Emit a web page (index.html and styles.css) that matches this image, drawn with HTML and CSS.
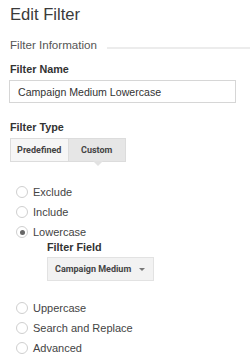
FILE: index.html
```html
<!DOCTYPE html>
<html lang="en">
<head>
    <meta charset="UTF-8">
    <meta name="viewport" content="width=device-width, initial-scale=1.0">
    <title>Edit Filter</title>
    <link rel="stylesheet" href="styles.css">
</head>
<body>
    <div class="page">
        <h1 class="title">Edit Filter</h1>

        <!-- Filter Information -->
        <div class="section-head">
            <span class="section-name">Filter Information</span>
            <span class="section-line"></span>
        </div>

        <label class="field-label" for="filterName">Filter Name</label>
        <input class="text-input" type="text" id="filterName" value="Campaign Medium Lowercase">

        <!-- Filter Type -->
        <div class="field-label type-label">Filter Type</div>
        <div class="segments">
            <button class="segment">Predefined</button>
            <button class="segment selected">Custom</button>
        </div>

        <div class="radios">
            <label class="radio-row"><span class="radio"></span>Exclude</label>
            <label class="radio-row"><span class="radio"></span>Include</label>
            <label class="radio-row"><span class="radio checked"></span>Lowercase</label>
            <div class="sub-field">
                <div class="sub-label">Filter Field</div>
                <button class="dropdown">Campaign Medium <span class="caret"></span></button>
            </div>
            <label class="radio-row"><span class="radio"></span>Uppercase</label>
            <label class="radio-row"><span class="radio"></span>Search and Replace</label>
            <label class="radio-row"><span class="radio"></span>Advanced</label>
        </div>
    </div>
</body>
</html>
```

FILE: styles.css
```css
body { margin: 0; background: #fff; font-family: "Liberation Sans", Arial, sans-serif; color: #333; }
.page { padding-left: 10px; }

.title { margin: 5px 0 0; font-size: 16.6px; line-height: 20px; font-weight: normal; color: #3a3a3a; }

.section-head { display: flex; align-items: flex-end; margin-top: 13px; height: 14px; }
.section-name { font-size: 11.6px; line-height: 14px; color: #555; white-space: nowrap; }
.section-line { flex: 1; height: 2px; background: #ececec; margin: 0 0 3px 10px; }

.field-label { display: block; margin-top: 11px; font-size: 10.8px; line-height: 13px; font-weight: bold; color: #333; }
.text-input { display: block; box-sizing: border-box; width: 227px; height: 23px; margin: 4px 0 0 -1px; padding: 0 8px; border: 1px solid #d6d6d6; font-family: "Liberation Sans", Arial, sans-serif; font-size: 10.6px; color: #333; outline: none; }

.type-label { margin-top: 18px; }

.segments { display: flex; margin-top: 4px; width: 116px; height: 24px; }
.segment { position: relative; flex: 1; box-sizing: border-box; padding: 0; border: 1px solid #dcdcdc; background: #f6f6f6; font-family: Roboto, "Liberation Sans", sans-serif; font-size: 9px; font-weight: bold; color: #444; }
.segment + .segment { border-left: none; }
.segment.selected { background: #e6e6e6; }
.segment.selected::after { content: ""; position: absolute; left: 24px; top: 100%; border-left: 5px solid transparent; border-right: 5px solid transparent; border-top: 5px solid #e2e2e2; }

.radios { margin-top: 20px; }
.radio-row { display: flex; align-items: center; height: 20px; font-size: 11px; color: #444; }
.radio { box-sizing: border-box; width: 12px; height: 12px; margin: 0 5px 0 6px; border: 1px solid #cfcfcf; border-radius: 50%; background: #fff; display: flex; align-items: center; justify-content: center; }
.radio.checked::after { content: ""; width: 5px; height: 5px; border-radius: 50%; background: #666; }

.sub-field { padding-left: 37px; margin-bottom: 17px; }
.sub-label { font-size: 10.8px; line-height: 11px; font-weight: bold; color: #333; }
.dropdown { display: flex; align-items: center; box-sizing: border-box; width: 107px; height: 24px; margin-top: 4px; padding: 0 0 0 7px; border: 1px solid #e2e2e2; background: #f2f2f2; font-family: Roboto, "Liberation Sans", sans-serif; font-size: 9px; font-weight: bold; color: #444; }
.caret { margin-left: auto; margin-right: 8px; border-left: 3px solid transparent; border-right: 3px solid transparent; border-top: 3px solid #777; }
```
